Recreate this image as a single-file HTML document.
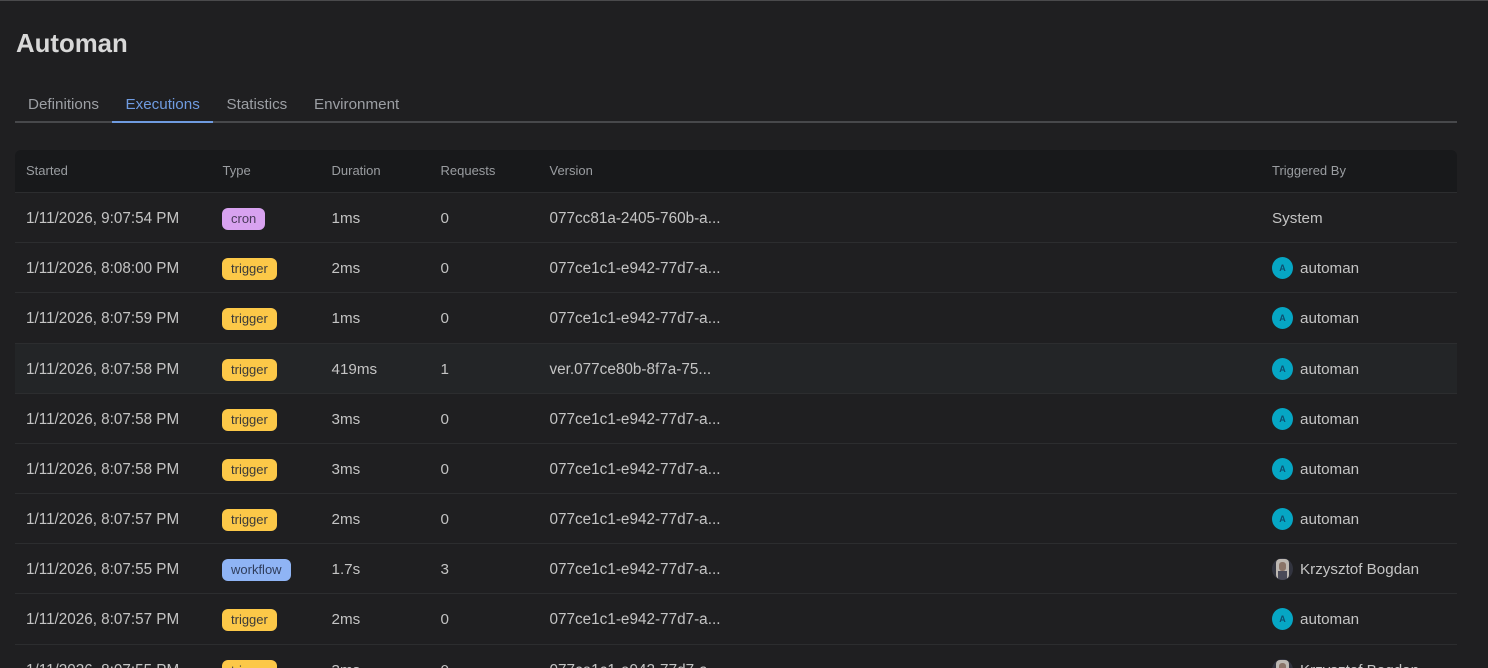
<!DOCTYPE html>
<html><head><meta charset="utf-8"><style>
html,body{margin:0;padding:0;background:#1f1f21;width:1488px;height:668px;overflow:hidden;}
body{position:relative;font-family:"Liberation Sans",sans-serif;color:#c4c4c4;font-size:15.2px;}
.a{position:absolute;white-space:nowrap;}
.topline{left:0;top:0;width:1488px;height:1px;background:#4a4a4c;}
h1{position:absolute;margin:0;left:16px;top:28px;font-size:25.8px;line-height:32px;font-weight:700;color:#d8d8d8;}
.tab{top:95px;font-size:15.2px;line-height:20px;color:#9c9fa4;}
.thead{left:15px;top:150px;width:1442px;height:42px;background:#18191b;border-radius:6px 6px 0 0;}
.th{top:163px;font-size:13px;line-height:16px;color:#9a9da1;}
.row{left:15px;width:1442px;height:50px;border-top:1px solid #2c2d2f;}
.hl{background:#232527;}
.row span{position:absolute;white-space:nowrap;top:17px;line-height:18px;}
.row .c1{left:11px;font-size:15.25px}.row .c3{left:316.5px}.row .c4{left:425.5px}.row .c5{left:534.5px;font-size:15.3px}.row .c6{left:1285px}
.row .b{left:207px;top:15px;height:22px;line-height:22px;border-radius:6px;padding:0 9px;font-size:13px;color:#3a3a3a;}
.cron{background:#d8a2f0;color:#4b3a5c !important}
.trigger{background:#fcc848;}
.workflow{background:#8fb4f5;color:#2f3d5c !important}
.row .av{left:1257px;top:14px;width:21px;height:22px;border-radius:50%;background:#06a6c4;color:#0d4f70;font-size:9px;font-weight:700;line-height:22px;text-align:center;}
.row .ph{background:#32343f;overflow:hidden;}
.row .ph i{position:absolute;display:block;}
</style></head><body>
<div class="a topline"></div>
<h1>Automan</h1>
<div class="a tab" style="left:28px">Definitions</div>
<div class="a tab" style="left:125.5px;color:#6f9be0">Executions</div>
<div class="a tab" style="left:226.5px">Statistics</div>
<div class="a tab" style="left:314px">Environment</div>
<div class="a" style="left:15px;top:121px;width:1442px;height:2px;background:#47484b"></div>
<div class="a" style="left:112px;top:121px;width:101px;height:2px;background:#6f9be0"></div>

<div class="a thead"></div>
<div class="a th" style="left:26px">Started</div>
<div class="a th" style="left:222.5px">Type</div>
<div class="a th" style="left:331.5px">Duration</div>
<div class="a th" style="left:440.5px">Requests</div>
<div class="a th" style="left:549.5px">Version</div>
<div class="a th" style="left:1272px">Triggered By</div>

<div class="a row" style="top:192px"><span class="c1">1/11/2026, 9:07:54 PM</span><span class="b cron">cron</span><span class="c3">1ms</span><span class="c4">0</span><span class="c5">077cc81a-2405-760b-a...</span><span style="left:1257px">System</span></div>
<div class="a row" style="top:242px"><span class="c1">1/11/2026, 8:08:00 PM</span><span class="b trigger">trigger</span><span class="c3">2ms</span><span class="c4">0</span><span class="c5">077ce1c1-e942-77d7-a...</span><span class="av">A</span><span class="c6">automan</span></div>
<div class="a row" style="top:292px"><span class="c1">1/11/2026, 8:07:59 PM</span><span class="b trigger">trigger</span><span class="c3">1ms</span><span class="c4">0</span><span class="c5">077ce1c1-e942-77d7-a...</span><span class="av">A</span><span class="c6">automan</span></div>
<div class="a row hl" style="top:343px"><span class="c1">1/11/2026, 8:07:58 PM</span><span class="b trigger">trigger</span><span class="c3">419ms</span><span class="c4">1</span><span class="c5">ver.077ce80b-8f7a-75...</span><span class="av">A</span><span class="c6">automan</span></div>
<div class="a row" style="top:393px"><span class="c1">1/11/2026, 8:07:58 PM</span><span class="b trigger">trigger</span><span class="c3">3ms</span><span class="c4">0</span><span class="c5">077ce1c1-e942-77d7-a...</span><span class="av">A</span><span class="c6">automan</span></div>
<div class="a row" style="top:443px"><span class="c1">1/11/2026, 8:07:58 PM</span><span class="b trigger">trigger</span><span class="c3">3ms</span><span class="c4">0</span><span class="c5">077ce1c1-e942-77d7-a...</span><span class="av">A</span><span class="c6">automan</span></div>
<div class="a row" style="top:493px"><span class="c1">1/11/2026, 8:07:57 PM</span><span class="b trigger">trigger</span><span class="c3">2ms</span><span class="c4">0</span><span class="c5">077ce1c1-e942-77d7-a...</span><span class="av">A</span><span class="c6">automan</span></div>
<div class="a row" style="top:543px"><span class="c1">1/11/2026, 8:07:55 PM</span><span class="b workflow">workflow</span><span class="c3">1.7s</span><span class="c4">3</span><span class="c5">077ce1c1-e942-77d7-a...</span><span class="av ph"><i style="left:4px;top:1px;width:13px;height:20px;background:#bdb8b2;border-radius:4px"></i><i style="left:7px;top:4px;width:7px;height:9px;background:#8a7468;border-radius:3px"></i><i style="left:6px;top:13px;width:9px;height:9px;background:#4a4a58"></i></span><span class="c6">Krzysztof Bogdan</span></div>
<div class="a row" style="top:593px"><span class="c1">1/11/2026, 8:07:57 PM</span><span class="b trigger">trigger</span><span class="c3">2ms</span><span class="c4">0</span><span class="c5">077ce1c1-e942-77d7-a...</span><span class="av">A</span><span class="c6">automan</span></div>
<div class="a row" style="top:644px"><span class="c1">1/11/2026, 8:07:55 PM</span><span class="b trigger">trigger</span><span class="c3">3ms</span><span class="c4">0</span><span class="c5">077ce1c1-e942-77d7-a...</span><span class="av ph"><i style="left:4px;top:1px;width:13px;height:20px;background:#bdb8b2;border-radius:4px"></i><i style="left:7px;top:4px;width:7px;height:9px;background:#8a7468;border-radius:3px"></i><i style="left:6px;top:13px;width:9px;height:9px;background:#4a4a58"></i></span><span class="c6">Krzysztof Bogdan</span></div>
</body></html>
